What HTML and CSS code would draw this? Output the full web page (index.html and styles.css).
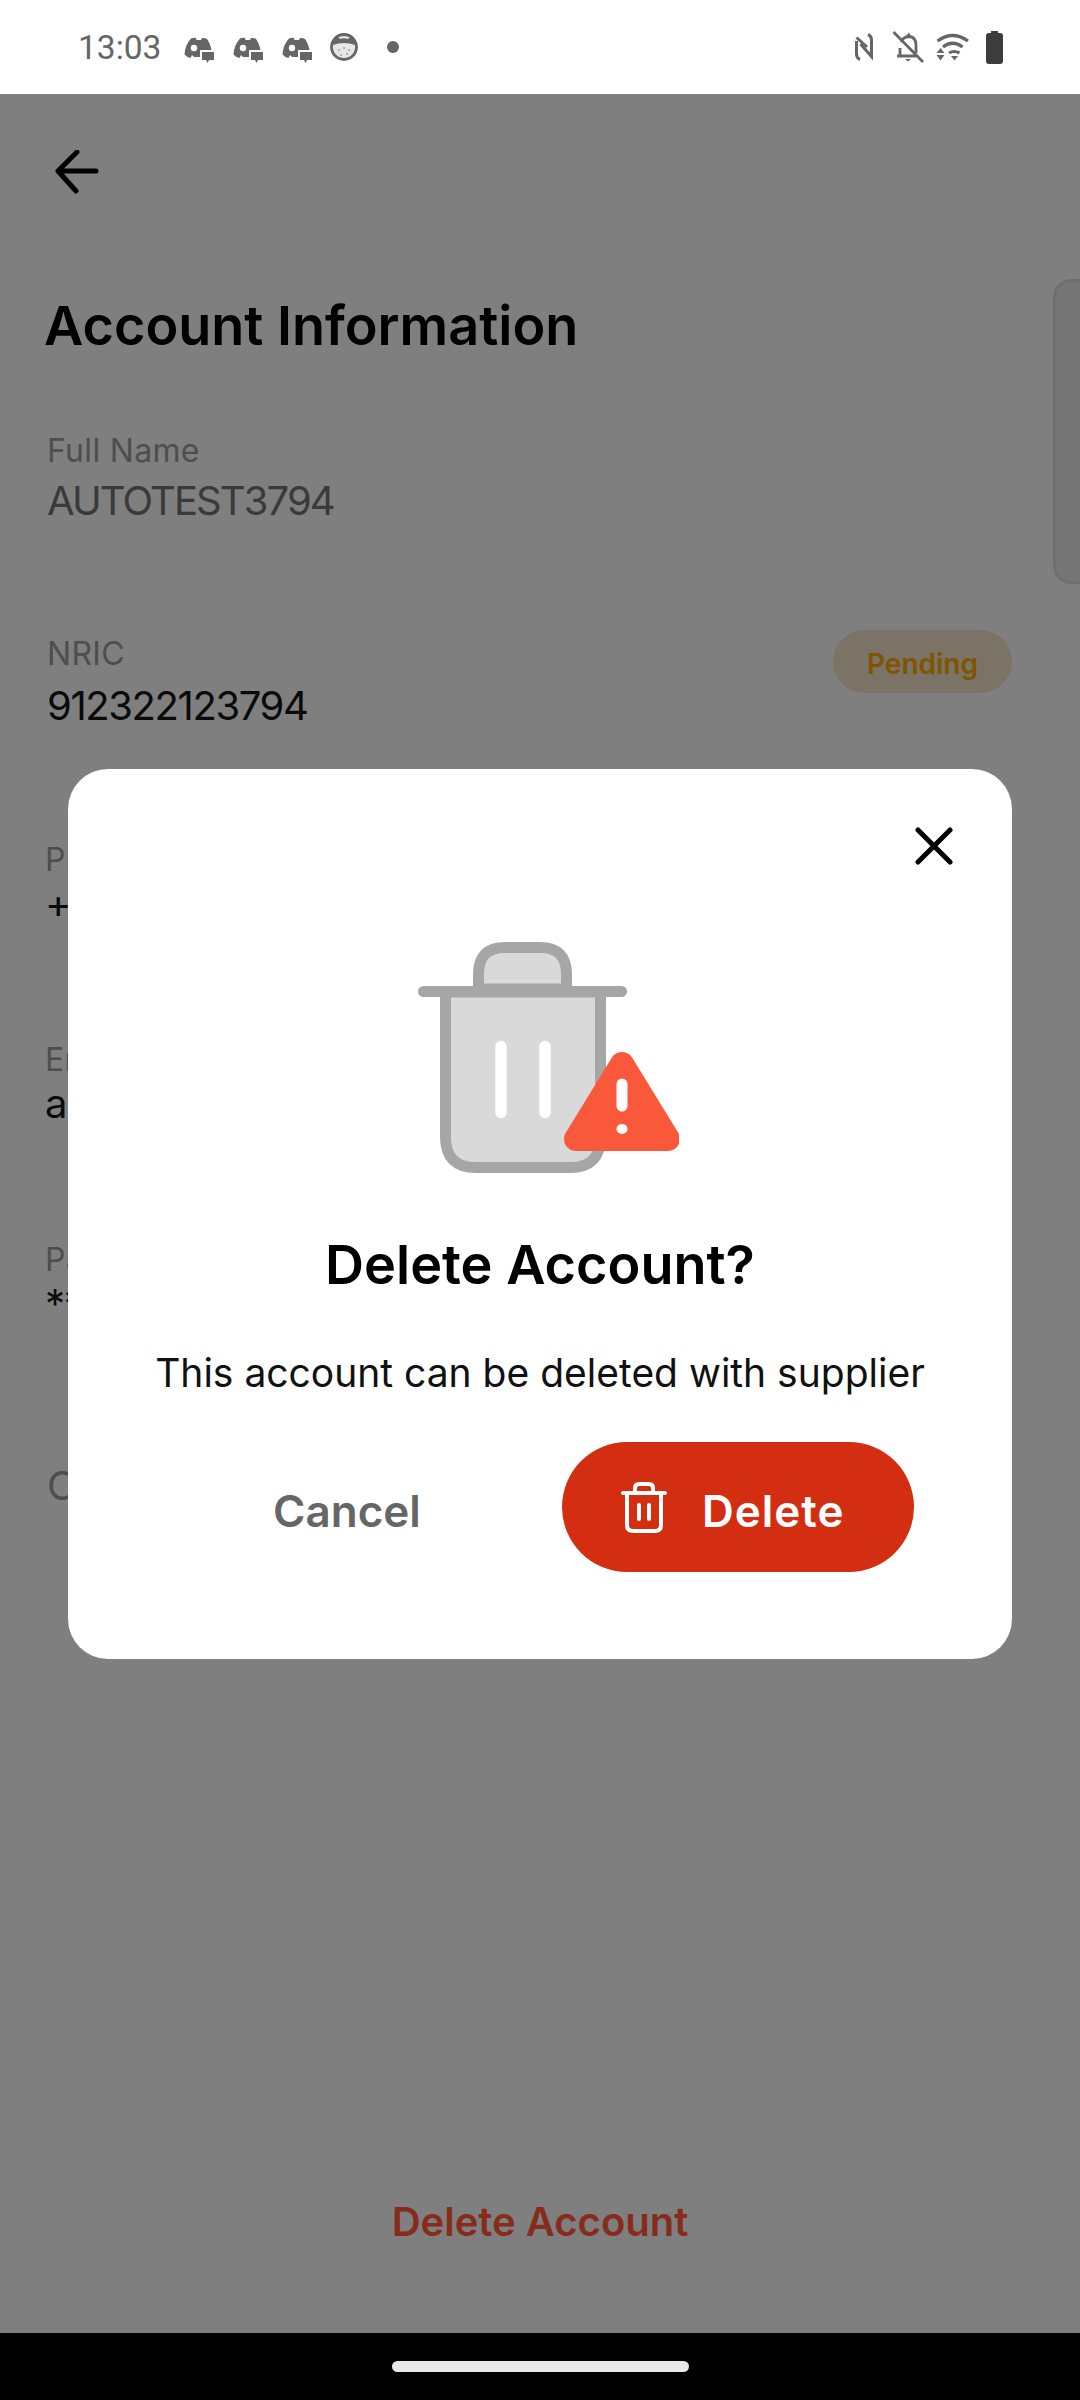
FILE: index.html
```html
<!DOCTYPE html>
<html lang="en">
 <head>
  <meta charset="UTF-8">
  <title>Account Information</title>
  <meta name="viewport" content="width=device-width, initial-scale=1.0">
  <link rel="stylesheet" href="styles.css">
 </head>
 <body>
  <div class="status">
   <span class="time">13:03</span>
   <div class="notifs">
    <svg class="game" viewBox="0 0 30 26"><path d="M7 1.500Q10 .5 12 1L12.500 3H17L18 1Q21 .5 23 2Q26 6 27.500 13H16V20H10L8 18L6.500 21Q2.500 20 .5 17.500Q1 8 7 1.500Z" fill="#666"/><circle cx="10" cy="11" r="3.200" fill="#fff"/><path d="M18 15H30V23H25L23.500 26L22 23H18Z" fill="#666"/></svg>
    <svg class="game" viewBox="0 0 30 26"><path d="M7 1.500Q10 .5 12 1L12.500 3H17L18 1Q21 .5 23 2Q26 6 27.500 13H16V20H10L8 18L6.500 21Q2.500 20 .5 17.500Q1 8 7 1.500Z" fill="#666"/><circle cx="10" cy="11" r="3.200" fill="#fff"/><path d="M18 15H30V23H25L23.500 26L22 23H18Z" fill="#666"/></svg>
    <svg class="game" viewBox="0 0 30 26"><path d="M7 1.500Q10 .5 12 1L12.500 3H17L18 1Q21 .5 23 2Q26 6 27.500 13H16V20H10L8 18L6.500 21Q2.500 20 .5 17.500Q1 8 7 1.500Z" fill="#666"/><circle cx="10" cy="11" r="3.200" fill="#fff"/><path d="M18 15H30V23H25L23.500 26L22 23H18Z" fill="#666"/></svg>
    <svg class="cat" viewBox="0 0 28 28"><circle cx="14" cy="14" r="12.500" fill="#e6e6e6" stroke="#666" stroke-width="2.800"/><path d="M3 12Q3 5 7 3L10 6Q14 4.500 18 6L21 3Q25 5 25 12Q14 8 3 12Z" fill="#666"/><path d="M9 17h.1M14 15h.1M19 17h.1M11 22h.1M17 21h.1" stroke="#777" stroke-width="1.600" stroke-linecap="round"/></svg>
    <span class="dot"></span>
   </div>
   <div class="sys">
    <svg class="nfc" viewBox="0 0 18 28" fill="none" stroke="#666" stroke-width="3"><path d="M5 26.500Q1.500 25 1.500 21V8"/><path d="M1.500 4.500L12 14"/><path d="M5.500 11L16.500 23.500V7Q16.500 3 13 1.500"/></svg>
    <svg class="bell" viewBox="0 0 32 32" fill="none" stroke="#666" stroke-width="2.800"><path d="M5 25H24M8 25V17M9 11Q11 6 17 5.500Q24 6 24 14V22"/><path d="M14 5L17 1.500L19 5Z" fill="#666" stroke="none"/><path d="M13 28H19L16 30.500Z" fill="#666" stroke="none"/><path d="M1.500 1L31 31"/></svg>
    <svg class="wifi" viewBox="0 0 33 28" fill="none" stroke="#666" stroke-width="3.200"><path d="M1.500 8Q16.500 -3 32 8"/><path d="M7 14Q16.500 6.500 26.500 14"/><path d="M13 20Q18 17 23.500 20"/><path d="M15 23H22L18.500 27.500Z" fill="#666" stroke="none"/><path d="M4.500 15L8.500 20H.5Z" fill="#666" stroke="none"/><path d="M.5 22H8.500L4.500 27.500Z" fill="#666" stroke="none"/></svg>
    <span class="battery"></span>
   </div>
  </div>

  <div class="main">
   <svg class="back" viewBox="0 0 44 44" fill="none" stroke="#000" stroke-width="5" stroke-linecap="round" stroke-linejoin="round"><path d="M41 21H3M22 2L3 21L21 41"/></svg>
   <h1>Account Information</h1>
   <div class="field first">
    <div>
     <div class="label">Full Name</div>
     <div class="value muted">AUTOTEST3794</div>
    </div>
   </div>
   <div class="field nric">
    <div>
     <div class="label">NRIC</div>
     <div class="value">912322123794</div>
    </div>
    <span class="pending">Pending</span>
   </div>
   <div class="field lower">
    <div>
     <div class="label">Phone</div>
     <div class="value">+</div>
    </div>
   </div>
   <div class="field lower">
    <div>
     <div class="label">Email</div>
     <div class="value">a</div>
    </div>
   </div>
   <div class="field lower password">
    <div>
     <div class="label">Password</div>
     <div class="value">**</div>
    </div>
   </div>
   <div class="change">C</div>
   <div class="remove">Delete Account</div>
   <div class="handle"></div>

   <div class="scrim">
    <div class="modal">
     <svg class="close" viewBox="0 0 38 38" fill="none" stroke="#000" stroke-width="5" stroke-linecap="round"><path d="M3 3L35 35M35 3L3 35"/></svg>
     <svg class="bin" viewBox="0 0 261 231">
      <path d="M60.500 47V32Q60.500 5.500 87 5.500H122Q148.500 5.500 148.500 32V47Z" fill="#d9d9d9" stroke="#a6a6a6" stroke-width="11"/>
      <path d="M27.500 50H182.500V195Q182.500 225.500 152 225.500H58Q27.500 225.500 27.500 195Z" fill="#d9d9d9" stroke="#a6a6a6" stroke-width="11"/>
      <path d="M5.500 49.500H203.500" stroke="#a6a6a6" stroke-width="11" stroke-linecap="round"/>
      <path d="M83 104.500V170.500M127 104.500V170.500" stroke="#fff" stroke-width="11.500" stroke-linecap="round"/>
      <path d="M204 122L250 197H158Z" fill="#fa583b" stroke="#fa583b" stroke-width="24" stroke-linejoin="round"/>
      <path d="M204 142V164" stroke="#fff" stroke-width="11" stroke-linecap="round"/>
      <ellipse cx="204" cy="187" rx="5.500" ry="5" fill="#fff"/>
     </svg>
     <h2>Delete Account?</h2>
     <p>This account can be deleted with supplier</p>
     <div class="actions">
      <div class="cancel">Cancel</div>
      <div class="confirm">
       <svg viewBox="0 0 46 51" fill="none" stroke="#fff" stroke-width="4" stroke-linecap="round" stroke-linejoin="round"><path d="M14 10V6Q14 2 18 2H28Q32 2 32 6V10"/><path d="M2 11H44"/><path d="M6 12V43Q6 49 12 49H34Q40 49 40 43V12"/><path d="M18 23V37M28 23V37"/></svg>
       <span>Delete</span>
      </div>
     </div>
    </div>
   </div>
  </div>

  <div class="navbar"><span class="pill"></span></div>
 </body>
</html>
```

FILE: styles.css
```css
* {
  box-sizing: border-box;
}
html, body {
  margin: 0;
  height: 2400px;
}
body {
  font-family: Inter, 'Noto Sans', sans-serif;
  display: flex;
  flex-direction: column;
  background: #fff;
  overflow: hidden;
}

/* status bar */
.status {
  height: 94px;
  flex: none;
  display: flex;
  align-items: center;
  padding: 0 77px 0 78px;
  background: #fff;
}
.time {
  font-family: Roboto, sans-serif;
  font-size: 33.5px;
  color: #666;
  width: 106px;
}
.notifs {
  display: flex;
  align-items: center;
  gap: 19px;
}
.game {
  width: 30px;
  height: 26px;
  margin-top: 5px;
}
.cat {
  width: 28px;
  height: 28px;
  margin-left: -1px;
}
.dot {
  width: 12px;
  height: 12px;
  border-radius: 50%;
  background: #666;
  margin-left: 10px;
}
.sys {
  margin-left: auto;
  display: flex;
  align-items: center;
  gap: 14px;
}
.nfc {
  width: 18px;
  height: 28px;
  margin-right: 5px;
}
.bell {
  width: 32px;
  height: 32px;
  margin-right: -2px;
}
.wifi {
  width: 33px;
  height: 28px;
  margin-right: 3px;
}
.battery {
  position: relative;
  width: 17px;
  height: 31px;
  margin-top: 2px;
  background: #3c3c3c;
  border-radius: 3px;
}
.battery::before {
  content: "";
  position: absolute;
  top: -2px;
  left: 5px;
  width: 7px;
  height: 2px;
  background: #3c3c3c;
}

/* page under the dialog */
.main {
  position: relative;
  flex: 1;
  display: flex;
  flex-direction: column;
  padding: 56px 68px 0 47px;
  overflow: hidden;
}
.back {
  width: 44px;
  height: 44px;
  margin-left: 8px;
  flex: none;
}
h1 {
  margin: 97px 0 0 -3px;
  font-size: 54px;
  line-height: 70px;
  font-weight: 600;
  color: #000;
}
.field {
  height: 203px;
  display: flex;
  justify-content: space-between;
  align-items: flex-start;
}
.first {
  margin-top: 70px;
}
.nric {
  height: 206px;
}
.nric .value {
  margin-top: 8px;
}
.lower {
  height: 200px;
  margin-left: -2px;
}
.lower .value {
  margin-top: 0;
}
.password {
  height: 209px;
}
.label {
  font-size: 32px;
  line-height: 40px;
  letter-spacing: 0.3px;
  color: #9c9c9c;
}
.value {
  font-size: 40px;
  line-height: 48px;
  margin-top: 6px;
  letter-spacing: -1.4px;
  color: #151515;
}
.muted {
  letter-spacing: -1.9px;
  color: #747474;
}
.pending {
  margin-top: -4px;
  width: 179px;
  height: 63px;
  border-radius: 32px;
  background: #f6e6ca;
  color: #ffaa00;
  font-size: 28px;
  font-weight: 600;
  line-height: 68px;
  text-align: center;
}
.change {
  margin-top: 13px;
  font-size: 40px;
  line-height: 48px;
  color: #9c9c9c;
}
/* sits above the scrim, it stays brighter than the dimmed page */
.remove {
  z-index: 1;
  margin-top: auto;
  margin-bottom: 87px;
  padding-left: 21px;
  text-align: center;
  font-size: 40px;
  font-weight: 600;
  line-height: 48px;
  color: #872c1c;
}
.handle {
  position: absolute;
  top: 185px;
  right: -20px;
  width: 47px;
  height: 305px;
  border-radius: 18px;
  border: 3px solid #dfdfdf;
  background: #eaeaea;
}

/* dialog */
.scrim {
  position: absolute;
  inset: 0;
  background: rgba(0,0,0,0.5);
  display: flex;
  align-items: center;
  justify-content: center;
}
.modal {
  position: relative;
  width: 944px;
  height: 890px;
  background: #fff;
  border-radius: 40px;
  display: flex;
  flex-direction: column;
  align-items: center;
}
.close {
  position: absolute;
  top: 58px;
  right: 59px;
  width: 38px;
  height: 38px;
}
.bin {
  width: 261px;
  height: 231px;
  margin-top: 173px;
  margin-left: 17px;
  flex: none;
}
h2 {
  margin: 57px 0 0;
  font-size: 54px;
  line-height: 70px;
  font-weight: 600;
  color: #000;
}
.modal p {
  margin: 50px 0 0;
  font-size: 39px;
  line-height: 46px;
  color: #111;
}
.actions {
  align-self: stretch;
  display: flex;
  align-items: center;
  margin-top: 46px;
  padding: 0 98px 0 64px;
}
.cancel {
  flex: 1;
  text-align: center;
  font-size: 44px;
  font-weight: 600;
  color: #666;
  padding-top: 8px;
}
.confirm {
  width: 352px;
  height: 130px;
  border-radius: 65px;
  background: #d42e12;
  display: flex;
  align-items: center;
  padding-left: 59px;
  color: #fff;
  font-size: 44px;
  font-weight: 600;
}
.confirm svg {
  width: 46px;
  height: 51px;
  margin-right: 35px;
  margin-top: 2px;
}
.confirm span {
  padding-top: 8px;
  letter-spacing: 1px;
}

.navbar {
  height: 67px;
  flex: none;
  background: #000;
  display: flex;
  justify-content: center;
  padding-top: 28px;
}
.pill {
  width: 297px;
  height: 11px;
  border-radius: 6px;
  background: #e9e9e9;
}
```
